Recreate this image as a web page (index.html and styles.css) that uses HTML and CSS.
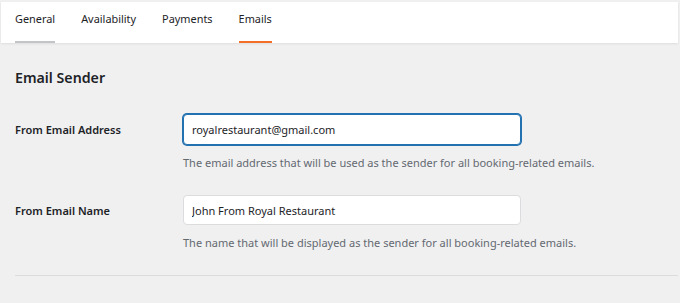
FILE: index.html
```html
<!DOCTYPE html>
<html lang="en">
<head>
    <meta charset="UTF-8">
    <meta name="viewport" content="width=device-width, initial-scale=1.0">
    <title>Email settings</title>
    <link rel="stylesheet" href="styles.css">
</head>
<body>
    <div class="page">
        <nav class="tabs">
            <a class="tab tab-general">General</a>
            <a class="tab">Availability</a>
            <a class="tab">Payments</a>
            <a class="tab active">Emails</a>
        </nav>

        <div class="section">
            <h2 class="section-title">Email Sender</h2>

            <div class="row">
                <label class="label" for="from-email">From Email Address</label>
                <div class="field">
                    <input type="text" id="from-email" class="input focus" value="royalrestaurant@gmail.com">
                    <p class="help">The email address that will be used as the sender for all booking-related emails.</p>
                </div>
            </div>

            <div class="row">
                <label class="label" for="from-name">From Email Name</label>
                <div class="field">
                    <input type="text" id="from-name" class="input" value="John From Royal Restaurant">
                    <p class="help">The name that will be displayed as the sender for all booking-related emails.</p>
                </div>
            </div>

            <hr class="divider">
        </div>
    </div>
</body>
</html>
```

FILE: styles.css
```css
html, body {
    margin: 0;
    padding: 0;
}
body {
    background: #f0f0f1;
    font-family: "Noto Sans", "Open Sans", sans-serif;
    color: #1d2327;
}
.page {
    padding: 2px 2px 0 1px;
}
.tabs {
    display: flex;
    gap: 26px;
    height: 41px;
    padding: 0 14px;
    background: #fff;
    box-shadow: 0 1px 2px rgba(0, 0, 0, 0.08);
}
.tab {
    display: flex;
    align-items: center;
    padding-bottom: 6px;
    font-size: 10.9px;
    color: #1d2327;
    border-bottom: 2px solid transparent;
    box-sizing: border-box;
}
.tab-general {
    border-bottom-color: #c3c4c7;
}
.tab.active {
    border-bottom-color: #f56e28;
}
.section {
    padding: 25px 0 0 14px;
}
.section-title {
    margin: 0 0 26px;
    font-size: 14.2px;
    line-height: 20px;
    font-weight: 600;
}
.row {
    display: flex;
    margin-bottom: 24px;
}
.label {
    width: 168px;
    flex: none;
    padding-top: 8px;
    font-size: 11px;
    line-height: 16px;
    font-weight: 600;
}
.field {
    display: flex;
    flex-direction: column;
}
.input {
    width: 338px;
    height: 30px;
    box-sizing: border-box;
    padding: 0 8px;
    border: 1px solid #dcdcde;
    border-radius: 4px;
    background: #fff;
    font-family: inherit;
    font-size: 11px;
    color: #1d2327;
    outline: none;
}
.input.focus {
    height: 31px;
    border-color: #2271b1;
    box-shadow: 0 0 0 1px #2271b1;
}
.help {
    margin: 10px 0 0;
    font-size: 11px;
    line-height: 16px;
    color: #646970;
}
.divider {
    margin: 1px 0 0;
    border: 0;
    border-top: 1px solid #dcdcde;
}
```
